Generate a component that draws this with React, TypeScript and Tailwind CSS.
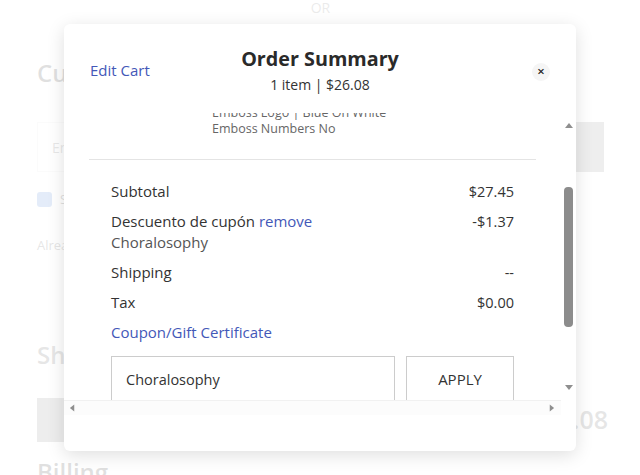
import React from "react";

const rows = [
  { label: "Subtotal", value: "$27.45" },
  { label: "Shipping", value: "--" },
  { label: "Tax", value: "$0.00" },
];

function Triangle({ dir }: { dir: "up" | "down" | "left" | "right" }) {
  const pts = {
    up: "0,6 4,1 8,6",
    down: "0,1 4,6 8,1",
    left: "6,0 1,4 6,8",
    right: "2,0 7,4 2,8",
  }[dir];
  const size = dir === "up" || dir === "down" ? "w-[8px] h-[7px]" : "w-[7px] h-[8px]";
  const box = dir === "up" || dir === "down" ? "0 0 8 7" : "0 0 8 8";
  return (
    <svg viewBox={box} className={size}>
      <polygon points={pts} fill="#8f8f8f" />
    </svg>
  );
}

function BackgroundPage() {
  return (
    <div className="flex flex-col pl-[37px] pr-[36px] text-[#333]">
      <div className="text-center text-[14px] leading-[16px] text-[#777]">OR</div>
      <h2 className="mt-[42px] text-[24px] font-semibold leading-[30px]">Customer</h2>
      <div className="mt-[34px] flex h-[50px]">
        <div className="flex flex-1 items-center border border-[#e6e6e6] pl-[14px] text-[14px] text-[#666]">
          Email Address
        </div>
        <div className="flex w-[140px] items-center justify-center bg-[#909090] text-[14px] text-white">
          CONTINUE
        </div>
      </div>
      <div className="mt-[18px] flex items-center gap-[8px]">
        <div className="h-[15px] w-[15px] rounded-[3px] bg-[#4a82d8]" />
        <span className="text-[13px]">Subscribe to our newsletter.</span>
      </div>
      <div className="mt-[26px] text-[13px] leading-[18px] text-[#555]">
        Already have an account? Sign in now
      </div>
      <h2 className="mt-[86px] text-[24px] font-semibold leading-[30px] text-[#555]">Shipping</h2>
      <div className="-mr-[4px] mt-[28px] flex h-[44px] items-center justify-between">
        <div className="h-[44px] w-[70px] bg-[#8a8a8a]" />
        <span className="text-[25px] font-semibold text-[#555]">$26.08</span>
      </div>
      <h2 className="mt-[15px] text-[24px] font-semibold leading-[30px]">Billing</h2>
    </div>
  );
}

export default function App() {
  return (
    <div className="relative h-[475px] w-[640px] overflow-hidden bg-white font-['Open_Sans',sans-serif]">
      <BackgroundPage />
      <div className="absolute inset-0 bg-white/85" />

      <div className="absolute left-[64px] top-[24px] flex h-[427px] w-[512px] flex-col rounded-[6px] bg-white shadow-[0_4px_18px_rgba(0,0,0,0.13)]">
        {/* header */}
        <div className="grid grid-cols-[1fr_auto_1fr] items-center px-[26px] pb-[17px] pt-[23px]">
          <a className="-mt-[2px] justify-self-start text-[15px] text-[#4358b8]">Edit Cart</a>
          <div className="text-center">
            <div className="text-[19.75px] font-bold leading-[24px] text-[#2a2a2a]">Order Summary</div>
            <div className="mt-[3px] text-[14px] leading-[22px] text-[#333]">1 item | $26.08</div>
          </div>
          <button className="flex h-[18px] w-[18px] items-center justify-center justify-self-end rounded-full bg-[#f5f5f5] text-[13px] font-semibold leading-none text-[#222]">
            ×
          </button>
        </div>

        {/* scroll area */}
        <div className="flex h-[287px]">
          <div className="flex-1 overflow-hidden">
            <div className="mx-[25px] border-b border-[#e4e4e4] pb-[22px] pl-[123px] text-[12.5px] leading-[16px] text-[#666]">
              <div className="-mt-[8px]">Emboss Logo | Blue On White</div>
              <div>Emboss Numbers No</div>
            </div>
            <div className="mx-[25px] flex flex-col gap-[9px] px-[22px] pt-[21px] text-[15px] leading-[21px] text-[#333]">
              <div className="flex justify-between">
                <span>{rows[0].label}</span>
                <span className="text-[14.5px]">{rows[0].value}</span>
              </div>
              <div className="flex justify-between">
                <div>
                  <div>
                    Descuento de cupón <a className="text-[#4358b8]">remove</a>
                  </div>
                  <div className="text-[#555]">Choralosophy</div>
                </div>
                <span className="text-[14.5px]">-$1.37</span>
              </div>
              {rows.slice(1).map((r) => (
                <div key={r.label} className="flex justify-between">
                  <span>{r.label}</span>
                  <span className="text-[14.5px]">{r.value}</span>
                </div>
              ))}
              <a className="text-[#4358b8]">Coupon/Gift Certificate</a>
              <div className="mt-[4px] flex gap-[11px]">
                <div className="flex h-[46px] flex-1 items-center border border-[#ccc] pl-[14px] text-[14.5px]">
                  Choralosophy
                </div>
                <button className="h-[46px] w-[108px] border border-[#ccc] text-[15px] text-[#333]">APPLY</button>
              </div>
            </div>
          </div>
          {/* vertical scrollbar */}
          <div className="flex w-[15px] flex-col items-center bg-white">
            <div className="mt-[9px]">
              <Triangle dir="up" />
            </div>
            <div className="mt-[58px] h-[140px] w-[9px] rounded-[4px] bg-[#8c8c8c]" />
            <div className="mb-[9px] mt-auto">
              <Triangle dir="down" />
            </div>
          </div>
        </div>

        {/* horizontal scrollbar */}
        <div className="flex h-[15px]">
          <div className="flex flex-1 items-center justify-between border-t border-[#f1f1f1] bg-[#fcfcfc] pl-[5px] pr-[6px]">
            <Triangle dir="left" />
            <Triangle dir="right" />
          </div>
          <div className="w-[15px] bg-white" />
        </div>
      </div>
    </div>
  );
}
